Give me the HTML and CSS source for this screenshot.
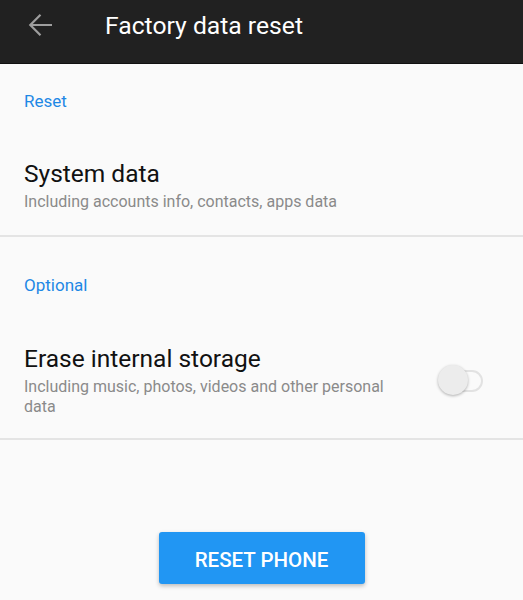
FILE: index.html
```html
<!DOCTYPE html>
<html>
<head>
  <title>Factory data reset</title>
  <link rel="stylesheet" href="styles.css">
</head>
<body>

  <div class="toolbar">
    <svg class="back" width="25" height="24" viewBox="0 0 25 24">
      <path d="M24 12H2.5M12.5 1.8L2.3 12L12.5 22.2" fill="none" stroke="#9e9e9e" stroke-width="2.2"/>
    </svg>
    <div class="title">Factory data reset</div>
  </div>

  <div class="section">Reset</div>
  <div class="item first">
    <div class="text">
      <div class="primary">System data</div>
      <div class="secondary">Including accounts info, contacts, apps data</div>
    </div>
  </div>

  <div class="section optional">Optional</div>
  <div class="item">
    <div class="text">
      <div class="primary">Erase internal storage</div>
      <div class="secondary">Including music, photos, videos and other personal data</div>
    </div>
    <div class="switch"><div class="thumb"></div></div>
  </div>

  <div class="actions">
    <button class="reset">RESET PHONE</button>
  </div>

</body>
</html>
```

FILE: styles.css
```css
body {
  margin: 0;
  font-family: Roboto, "Noto Sans", sans-serif;
  background: #fafafa;
  height: 600px;
  overflow: hidden;
}
.toolbar {
  height: 64px;
  background: #212121;
  display: flex;
  align-items: center;
  border-bottom: 1px solid #111;
  box-sizing: border-box;
}
.back {
  margin-left: 28px;
  margin-top: -14px;
}
.title {
  color: #fff;
  font-size: 24.7px;
  margin-left: 52px;
  margin-top: -12px;
}
.section {
  color: #1e88e5;
  font-size: 17px;
  padding: 27px 24px 0;
  height: 41px;
}
.section.optional {
  padding-top: 38px;
  height: 38px;
}
.item {
  display: flex;
  align-items: center;
  padding: 32px 24px 21px;
  border-bottom: 2px solid #e4e4e4;
}
.item.first {
  padding-top: 28px;
  padding-bottom: 23px;
}
.text { flex: 1; }
.primary {
  color: #111;
  font-size: 24.5px;
  line-height: 28px;
}
.secondary {
  color: #8a8a8a;
  font-size: 16px;
  line-height: 20px;
  margin-top: 4px;
  max-width: 385px;
}
.switch {
  position: relative;
  width: 40px;
  height: 18px;
  border: 2px solid #e2e2e2;
  border-radius: 11px;
  background: #fafafa;
  margin-right: 16px;
  margin-left: 30px;
}
.thumb {
  position: absolute;
  left: -3px;
  top: -7px;
  width: 30px;
  height: 30px;
  border-radius: 50%;
  background: #ececec;
  box-shadow: 0 1px 3px rgba(0,0,0,0.3);
}
.actions {
  display: flex;
  justify-content: center;
  padding-top: 92px;
}
.reset {
  width: 206px;
  height: 52px;
  background: #2196f3;
  color: #fff;
  border: none;
  border-radius: 3px;
  font-family: Roboto, sans-serif;
  font-size: 20.5px;
  font-weight: 500;
  padding-top: 4px;
  box-shadow: 0 2px 4px rgba(0,0,0,0.25);
}
```
